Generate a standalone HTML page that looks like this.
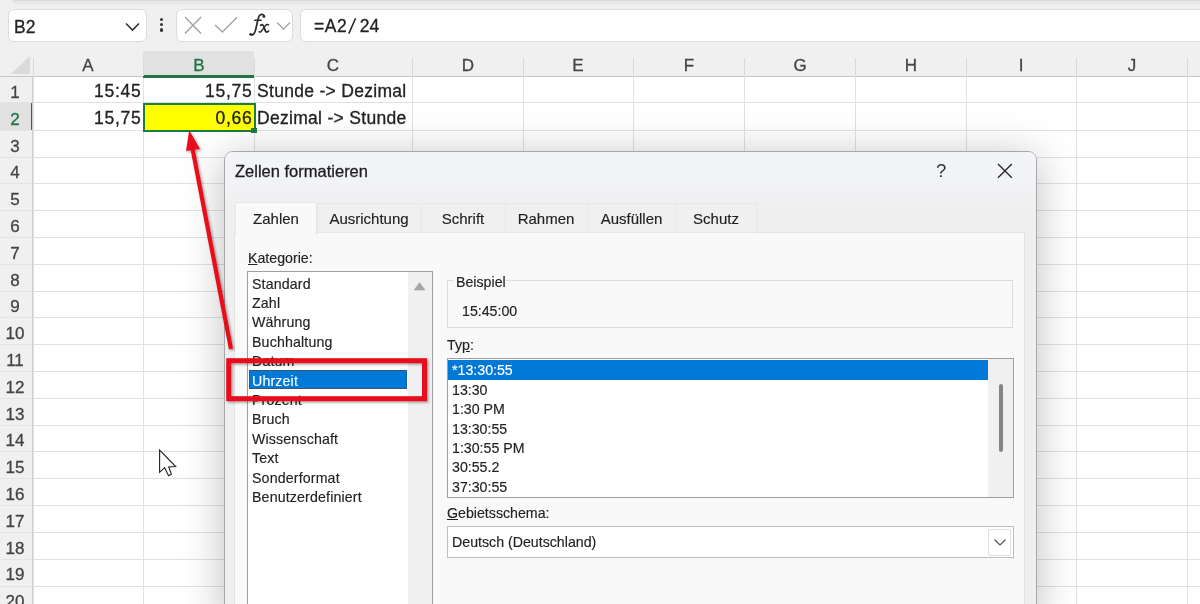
<!DOCTYPE html><html><head><meta charset="utf-8"><style>
*{margin:0;padding:0;box-sizing:border-box}
html,body{width:1200px;height:604px;overflow:hidden;background:#f0f0f0;font-family:"Liberation Sans",sans-serif;color:#222}
.a{position:absolute}
.box{position:absolute;background:#fff;border:1px solid #dcdcdc;border-radius:6px}
.t{position:absolute;white-space:nowrap;line-height:1;will-change:transform;-webkit-text-stroke:0.3px currentColor}
.hl{position:absolute;height:1px;background:#e1e1e1}
.vl{position:absolute;width:1px;background:#e1e1e1}
</style></head><body>
<div class="a" style="left:12px;top:0;width:1188px;height:5px;background:linear-gradient(#dadada 0px,#dadada 1px,#e8e8e8 1px,#e6e6e6 3.5px,#ececec 5px);border-bottom-left-radius:5px"></div><div class="box" style="left:8px;top:9px;width:139px;height:33px"></div><div class="t" style="left:13.5px;top:18.5px;font-size:17.5px;color:#222">B2</div><svg class="a" style="left:124px;top:21px" width="17" height="12"><path d="M2 2.5 L8.5 9 L15 2.5" fill="none" stroke="#333" stroke-width="1.6"/></svg><div class="a" style="left:159.9px;top:18.2px;width:3.2px;height:3.2px;border-radius:50%;background:#333"></div><div class="a" style="left:159.9px;top:23.2px;width:3.2px;height:3.2px;border-radius:50%;background:#333"></div><div class="a" style="left:159.9px;top:28.4px;width:3.2px;height:3.2px;border-radius:50%;background:#333"></div><div class="box" style="left:176px;top:9px;width:117px;height:33px"></div><svg class="a" style="left:176px;top:9px" width="117" height="32"><path d="M9 8 L25 24.5 M25 8 L9 24.5" stroke="#a6a6a6" stroke-width="1.5" fill="none"/><path d="M39 16 L46.5 23 L61 8.2" stroke="#a6a6a6" stroke-width="1.5" fill="none"/><path d="M101 13.5 L107.5 20 L114 13.5" stroke="#a6a6a6" stroke-width="1.3" fill="none"/></svg><svg class="a" style="left:0;top:0" width="300" height="45"><g fill="none" stroke="#2b2b2b" stroke-linecap="round"><path d="M264.2 16.6 C263.8 14.2 261 13.6 259.4 15.6 C257.8 17.8 256.6 27 255.2 31.2 C254.2 34.4 252.2 35.6 250.4 34.6" stroke-width="1.7"/><path d="M254.8 20.3 L261.2 20.3" stroke-width="1.4"/><path d="M260.6 25.4 C262 24.2 263.2 24.6 263.8 26.6 L265.1 30.4 C265.8 32.4 267.2 32.6 268.6 31.2" stroke-width="1.7"/><path d="M268.6 24.9 C267.4 24 266.2 24.5 265.2 25.9 L261.6 31 C260.6 32.4 259.6 32.4 259.1 31.6" stroke-width="1.4"/></g><circle cx="263.9" cy="16.4" r="1.4" fill="#2b2b2b"/><circle cx="250.7" cy="34.2" r="1.3" fill="#2b2b2b"/></svg><div class="box" style="left:300px;top:9px;width:920px;height:33px"></div><div class="t" style="left:314px;top:17.8px;font-size:17.5px;color:#222"><span style="letter-spacing:0.6px">=A2</span><span style="display:inline-block;width:12.3px"></span>24</div><svg class="a" style="left:340px;top:10px" width="30" height="30"><path d="M8.8 23.6 L15.6 8.3" stroke="#222" stroke-width="1.5"/></svg><div class="a" style="left:33px;top:51px;width:1167px;height:25px;background:#f0f0f0"></div><div class="a" style="left:143px;top:51px;width:111px;height:26px;background:#e1e1e1;border-bottom:2px solid #217346"></div><svg class="a" style="left:8px;top:54px" width="24" height="22"><path d="M22 2 L22 20 L3 20 Z" fill="#dadada"/></svg><div class="a" style="left:33px;top:76px;width:1167px;height:528px;background:#fff"></div><div class="a" style="left:0;top:76px;width:33px;height:528px;background:#f0f0f0"></div><div class="a" style="left:0;top:102px;width:33px;height:28px;background:#e1e1e1;border-right:2px solid #217346"></div><div class="a" style="left:0;top:76px;width:1200px;height:1px;background:#c6c6c6"></div><div class="hl" style="left:33px;top:102px;width:1167px"></div><div class="hl" style="left:0;top:102px;width:33px;background:#e4e4e4"></div><div class="hl" style="left:33px;top:130px;width:1167px"></div><div class="hl" style="left:0;top:130px;width:33px;background:#e4e4e4"></div><div class="hl" style="left:33px;top:157px;width:1167px"></div><div class="hl" style="left:0;top:157px;width:33px;background:#e4e4e4"></div><div class="hl" style="left:33px;top:183px;width:1167px"></div><div class="hl" style="left:0;top:183px;width:33px;background:#e4e4e4"></div><div class="hl" style="left:33px;top:210px;width:1167px"></div><div class="hl" style="left:0;top:210px;width:33px;background:#e4e4e4"></div><div class="hl" style="left:33px;top:237px;width:1167px"></div><div class="hl" style="left:0;top:237px;width:33px;background:#e4e4e4"></div><div class="hl" style="left:33px;top:264px;width:1167px"></div><div class="hl" style="left:0;top:264px;width:33px;background:#e4e4e4"></div><div class="hl" style="left:33px;top:291px;width:1167px"></div><div class="hl" style="left:0;top:291px;width:33px;background:#e4e4e4"></div><div class="hl" style="left:33px;top:317px;width:1167px"></div><div class="hl" style="left:0;top:317px;width:33px;background:#e4e4e4"></div><div class="hl" style="left:33px;top:344px;width:1167px"></div><div class="hl" style="left:0;top:344px;width:33px;background:#e4e4e4"></div><div class="hl" style="left:33px;top:371px;width:1167px"></div><div class="hl" style="left:0;top:371px;width:33px;background:#e4e4e4"></div><div class="hl" style="left:33px;top:398px;width:1167px"></div><div class="hl" style="left:0;top:398px;width:33px;background:#e4e4e4"></div><div class="hl" style="left:33px;top:425px;width:1167px"></div><div class="hl" style="left:0;top:425px;width:33px;background:#e4e4e4"></div><div class="hl" style="left:33px;top:451px;width:1167px"></div><div class="hl" style="left:0;top:451px;width:33px;background:#e4e4e4"></div><div class="hl" style="left:33px;top:478px;width:1167px"></div><div class="hl" style="left:0;top:478px;width:33px;background:#e4e4e4"></div><div class="hl" style="left:33px;top:505px;width:1167px"></div><div class="hl" style="left:0;top:505px;width:33px;background:#e4e4e4"></div><div class="hl" style="left:33px;top:532px;width:1167px"></div><div class="hl" style="left:0;top:532px;width:33px;background:#e4e4e4"></div><div class="hl" style="left:33px;top:559px;width:1167px"></div><div class="hl" style="left:0;top:559px;width:33px;background:#e4e4e4"></div><div class="hl" style="left:33px;top:586px;width:1167px"></div><div class="hl" style="left:0;top:586px;width:33px;background:#e4e4e4"></div><div class="vl" style="left:33px;top:76px;height:528px"></div><div class="vl" style="left:33px;top:58px;height:18px;background:#dadada"></div><div class="vl" style="left:143px;top:76px;height:528px"></div><div class="vl" style="left:143px;top:58px;height:18px;background:#dadada"></div><div class="vl" style="left:254px;top:76px;height:528px"></div><div class="vl" style="left:254px;top:58px;height:18px;background:#dadada"></div><div class="vl" style="left:412px;top:76px;height:528px"></div><div class="vl" style="left:412px;top:58px;height:18px;background:#dadada"></div><div class="vl" style="left:523px;top:76px;height:528px"></div><div class="vl" style="left:523px;top:58px;height:18px;background:#dadada"></div><div class="vl" style="left:633px;top:76px;height:528px"></div><div class="vl" style="left:633px;top:58px;height:18px;background:#dadada"></div><div class="vl" style="left:744px;top:76px;height:528px"></div><div class="vl" style="left:744px;top:58px;height:18px;background:#dadada"></div><div class="vl" style="left:855px;top:76px;height:528px"></div><div class="vl" style="left:855px;top:58px;height:18px;background:#dadada"></div><div class="vl" style="left:966px;top:76px;height:528px"></div><div class="vl" style="left:966px;top:58px;height:18px;background:#dadada"></div><div class="vl" style="left:1076px;top:76px;height:528px"></div><div class="vl" style="left:1076px;top:58px;height:18px;background:#dadada"></div><div class="vl" style="left:1187px;top:76px;height:528px"></div><div class="vl" style="left:1187px;top:58px;height:18px;background:#dadada"></div><div class="vl" style="left:32px;top:76px;height:528px;background:#d0d0d0"></div><div class="a" style="left:143px;top:75.5px;width:111px;height:2px;background:#217346"></div><div class="t" style="left:58.0px;width:60px;text-align:center;top:57px;font-size:17px;color:#444">A</div><div class="t" style="left:168.5px;width:60px;text-align:center;top:57px;font-size:17px;color:#217346">B</div><div class="t" style="left:303.0px;width:60px;text-align:center;top:57px;font-size:17px;color:#444">C</div><div class="t" style="left:437.5px;width:60px;text-align:center;top:57px;font-size:17px;color:#444">D</div><div class="t" style="left:548.0px;width:60px;text-align:center;top:57px;font-size:17px;color:#444">E</div><div class="t" style="left:658.5px;width:60px;text-align:center;top:57px;font-size:17px;color:#444">F</div><div class="t" style="left:769.5px;width:60px;text-align:center;top:57px;font-size:17px;color:#444">G</div><div class="t" style="left:880.5px;width:60px;text-align:center;top:57px;font-size:17px;color:#444">H</div><div class="t" style="left:991.0px;width:60px;text-align:center;top:57px;font-size:17px;color:#444">I</div><div class="t" style="left:1101.5px;width:60px;text-align:center;top:57px;font-size:17px;color:#444">J</div><div class="t" style="left:0;width:30px;text-align:center;top:83.9px;font-size:17px;color:#444">1</div><div class="t" style="left:0;width:30px;text-align:center;top:110.7px;font-size:17px;color:#217346">2</div><div class="t" style="left:0;width:30px;text-align:center;top:137.5px;font-size:17px;color:#444">3</div><div class="t" style="left:0;width:30px;text-align:center;top:164.3px;font-size:17px;color:#444">4</div><div class="t" style="left:0;width:30px;text-align:center;top:191.1px;font-size:17px;color:#444">5</div><div class="t" style="left:0;width:30px;text-align:center;top:217.9px;font-size:17px;color:#444">6</div><div class="t" style="left:0;width:30px;text-align:center;top:244.7px;font-size:17px;color:#444">7</div><div class="t" style="left:0;width:30px;text-align:center;top:271.5px;font-size:17px;color:#444">8</div><div class="t" style="left:0;width:30px;text-align:center;top:298.3px;font-size:17px;color:#444">9</div><div class="t" style="left:0;width:30px;text-align:center;top:325.1px;font-size:17px;color:#444">10</div><div class="t" style="left:0;width:30px;text-align:center;top:351.9px;font-size:17px;color:#444">11</div><div class="t" style="left:0;width:30px;text-align:center;top:378.7px;font-size:17px;color:#444">12</div><div class="t" style="left:0;width:30px;text-align:center;top:405.5px;font-size:17px;color:#444">13</div><div class="t" style="left:0;width:30px;text-align:center;top:432.3px;font-size:17px;color:#444">14</div><div class="t" style="left:0;width:30px;text-align:center;top:459.1px;font-size:17px;color:#444">15</div><div class="t" style="left:0;width:30px;text-align:center;top:485.9px;font-size:17px;color:#444">16</div><div class="t" style="left:0;width:30px;text-align:center;top:512.7px;font-size:17px;color:#444">17</div><div class="t" style="left:0;width:30px;text-align:center;top:539.5px;font-size:17px;color:#444">18</div><div class="t" style="left:0;width:30px;text-align:center;top:566.3px;font-size:17px;color:#444">19</div><div class="t" style="left:0;width:30px;text-align:center;top:593.1px;font-size:17px;color:#444">20</div><div class="a" style="left:143px;top:102.5px;width:113px;height:29.5px;background:#ffff00;border:2px solid #217a3f"></div><div class="a" style="left:251px;top:127.5px;width:6px;height:5.5px;background:#217a3f"></div><div class="t" style="left:33px;width:108.4px;text-align:right;top:83.3px;font-size:17.5px;letter-spacing:0.7px;color:#222">15:45</div><div class="t" style="left:143px;width:109.4px;text-align:right;top:83.3px;font-size:17.5px;letter-spacing:0.7px;color:#222">15,75</div><div class="t" style="left:257px;top:83.3px;font-size:17.5px;letter-spacing:0.3px;color:#222">Stunde -&gt; Dezimal</div><div class="t" style="left:33px;width:108.4px;text-align:right;top:110.3px;font-size:17.5px;letter-spacing:0.7px;color:#222">15,75</div><div class="t" style="left:143px;width:109.4px;text-align:right;top:110.3px;font-size:17.5px;letter-spacing:0.7px;color:#222">0,66</div><div class="t" style="left:257px;top:110.3px;font-size:17.5px;letter-spacing:0.3px;color:#222">Dezimal -&gt; Stunde</div><div class="a" style="left:224px;top:151px;width:813px;height:470px;border:1px solid #a8a8a8;border-radius:9px;background:#efefef;box-shadow:0 6px 44px rgba(0,0,0,0.26);overflow:hidden"><div class="a" style="left:0;top:0;width:811px;height:56px;background:linear-gradient(#f3f4f8 0px,#f2f3f6 30px,#efeff0 56px)"></div><div class="t" style="left:10px;top:10.5px;font-size:16.5px;color:#1f1f1f">Zellen formatieren</div><div class="t" style="left:710.5px;top:9.5px;font-size:18.5px;color:#333;-webkit-text-stroke:0">?</div><svg class="a" style="left:772px;top:11px" width="16" height="16"><path d="M1 1 L14.8 14.8 M14.8 1 L1 14.8" stroke="#2a2a2a" stroke-width="1.4"/></svg><div class="a" style="left:9px;top:80px;width:791px;height:400px;background:#f9f9f9;border-left:1px solid #e3e3e3;border-right:1px solid #e3e3e3;border-top:1px solid #e3e3e3"></div><div class="a" style="left:10px;top:50px;width:82px;height:33px;background:#f9f9f9;border:1px solid #e6e6e6;border-bottom:none"></div><div class="t" style="left:10px;top:59px;font-size:15px;-webkit-text-stroke:0.15px currentColor;width:82px;text-align:center;color:#222">Zahlen</div><div class="a" style="left:92px;top:51px;width:105px;height:30px;background:#f0f0f0;border:1px solid #e8e8e8"></div><div class="t" style="left:92px;top:59px;font-size:15px;-webkit-text-stroke:0.15px currentColor;width:104px;text-align:center;color:#222">Ausrichtung</div><div class="a" style="left:196px;top:51px;width:85px;height:30px;background:#f0f0f0;border:1px solid #e8e8e8"></div><div class="t" style="left:196px;top:59px;font-size:15px;-webkit-text-stroke:0.15px currentColor;width:84px;text-align:center;color:#222">Schrift</div><div class="a" style="left:280px;top:51px;width:83px;height:30px;background:#f0f0f0;border:1px solid #e8e8e8"></div><div class="t" style="left:280px;top:59px;font-size:15px;-webkit-text-stroke:0.15px currentColor;width:82px;text-align:center;color:#222">Rahmen</div><div class="a" style="left:362px;top:51px;width:90px;height:30px;background:#f0f0f0;border:1px solid #e8e8e8"></div><div class="t" style="left:362px;top:59px;font-size:15px;-webkit-text-stroke:0.15px currentColor;width:89px;text-align:center;color:#222">Ausf&uuml;llen</div><div class="a" style="left:451px;top:51px;width:81px;height:30px;background:#f0f0f0;border:1px solid #e8e8e8"></div><div class="t" style="left:451px;top:59px;font-size:15px;-webkit-text-stroke:0.15px currentColor;width:80px;text-align:center;color:#222">Schutz</div><div class="t" style="left:23px;top:99px;font-size:14.2px;-webkit-text-stroke:0.15px currentColor;color:#222"><u>K</u>ategorie:</div><div class="a" style="left:22px;top:119px;width:186px;height:340px;background:#fff;border:1px solid #a0a0a0"></div><div class="a" style="left:183px;top:120px;width:24px;height:340px;background:#f0f0f0"></div><svg class="a" style="left:188px;top:128.5px" width="14" height="12"><path d="M1.2 9 L6.6 1.6 L12 9 Z" fill="#a6a6a6" stroke="#a6a6a6" stroke-width="0.6" stroke-linejoin="round"/></svg><div class="t" style="left:27px;top:124.5px;font-size:14.2px;-webkit-text-stroke:0.15px currentColor;color:#222;letter-spacing:0.15px">Standard</div><div class="t" style="left:27px;top:143.89999999999998px;font-size:14.2px;-webkit-text-stroke:0.15px currentColor;color:#222;letter-spacing:0.15px">Zahl</div><div class="t" style="left:27px;top:163.3px;font-size:14.2px;-webkit-text-stroke:0.15px currentColor;color:#222;letter-spacing:0.15px">W&auml;hrung</div><div class="t" style="left:27px;top:182.7px;font-size:14.2px;-webkit-text-stroke:0.15px currentColor;color:#222;letter-spacing:0.15px">Buchhaltung</div><div class="t" style="left:27px;top:202.10000000000002px;font-size:14.2px;-webkit-text-stroke:0.15px currentColor;color:#222;letter-spacing:0.15px">Datum</div><div class="a" style="left:24px;top:218px;width:158px;height:19px;background:#0078d7;border:1px dotted #2a4a6a"></div><div class="t" style="left:27px;top:221.5px;font-size:14.2px;-webkit-text-stroke:0.15px currentColor;color:#fff;letter-spacing:0.15px">Uhrzeit</div><div class="t" style="left:27px;top:240.89999999999998px;font-size:14.2px;-webkit-text-stroke:0.15px currentColor;color:#222;letter-spacing:0.15px">Prozent</div><div class="t" style="left:27px;top:260.29999999999995px;font-size:14.2px;-webkit-text-stroke:0.15px currentColor;color:#222;letter-spacing:0.15px">Bruch</div><div class="t" style="left:27px;top:279.7px;font-size:14.2px;-webkit-text-stroke:0.15px currentColor;color:#222;letter-spacing:0.15px">Wissenschaft</div><div class="t" style="left:27px;top:299.1px;font-size:14.2px;-webkit-text-stroke:0.15px currentColor;color:#222;letter-spacing:0.15px">Text</div><div class="t" style="left:27px;top:318.5px;font-size:14.2px;-webkit-text-stroke:0.15px currentColor;color:#222;letter-spacing:0.15px">Sonderformat</div><div class="t" style="left:27px;top:337.9px;font-size:14.2px;-webkit-text-stroke:0.15px currentColor;color:#222;letter-spacing:0.15px">Benutzerdefiniert</div><div class="a" style="left:222px;top:128px;width:566px;height:48px;border:1px solid #dcdcdc"></div><div class="a" style="left:228px;top:122px;width:53px;height:12px;background:#f9f9f9"></div><div class="t" style="left:231px;top:122.5px;font-size:14.2px;-webkit-text-stroke:0.15px currentColor;color:#222">Beispiel</div><div class="t" style="left:237px;top:152px;font-size:14.2px;-webkit-text-stroke:0.15px currentColor;color:#222">15:45:00</div><div class="t" style="left:222px;top:185.5px;font-size:14.2px;-webkit-text-stroke:0.15px currentColor;color:#222">Ty<u>p</u>:</div><div class="a" style="left:222px;top:206px;width:567px;height:140px;background:#fff;border:1px solid #a0a0a0"></div><div class="a" style="left:763px;top:207px;width:25px;height:138px;background:#f0f0f0"></div><div class="a" style="left:773.5px;top:232px;width:4.5px;height:68px;background:#858585;border-radius:3px"></div><div class="a" style="left:223px;top:208px;width:540px;height:19.5px;background:#0078d7"></div><div class="t" style="left:226.5px;top:211.3px;font-size:14.2px;-webkit-text-stroke:0.15px currentColor;color:#fff">*13:30:55</div><div class="t" style="left:226.5px;top:230.7px;font-size:14.2px;-webkit-text-stroke:0.15px currentColor;color:#222">13:30</div><div class="t" style="left:226.5px;top:250.10000000000002px;font-size:14.2px;-webkit-text-stroke:0.15px currentColor;color:#222">1:30 PM</div><div class="t" style="left:226.5px;top:269.5px;font-size:14.2px;-webkit-text-stroke:0.15px currentColor;color:#222">13:30:55</div><div class="t" style="left:226.5px;top:288.9px;font-size:14.2px;-webkit-text-stroke:0.15px currentColor;color:#222">1:30:55 PM</div><div class="t" style="left:226.5px;top:308.3px;font-size:14.2px;-webkit-text-stroke:0.15px currentColor;color:#222">30:55.2</div><div class="t" style="left:226.5px;top:327.7px;font-size:14.2px;-webkit-text-stroke:0.15px currentColor;color:#222">37:30:55</div><div class="t" style="left:222px;top:353.5px;font-size:14.2px;-webkit-text-stroke:0.15px currentColor;color:#222"><u>G</u>ebietsschema:</div><div class="a" style="left:222px;top:374px;width:567px;height:32px;background:#fff;border:1px solid #bdbdbd"></div><div class="a" style="left:763px;top:377px;width:23px;height:27px;background:#fff;border:1px solid #dedede;border-radius:2px"></div><svg class="a" style="left:767.5px;top:384.5px" width="14" height="10"><path d="M1.5 2.5 L7 8 L12.5 2.5" fill="none" stroke="#555" stroke-width="1.2"/></svg><div class="t" style="left:227px;top:383px;font-size:14.2px;-webkit-text-stroke:0.15px currentColor;color:#222">Deutsch (Deutschland)</div></div><svg class="a" style="left:0;top:0" width="1200" height="604"><defs><filter id="sh" x="-20%" y="-20%" width="140%" height="140%"><feDropShadow dx="1.5" dy="1.5" stdDeviation="1.2" flood-color="#000" flood-opacity="0.35"/></filter></defs><g filter="url(#sh)"><line x1="231" y1="349" x2="192" y2="146" stroke="#e8101a" stroke-width="4.2" stroke-linecap="butt"/><path d="M189.2 130.3 L186 151 L200 149 Z" fill="#e8101a"/><rect x="228.7" y="360.7" width="195.8" height="38" fill="none" stroke="#e8101a" stroke-width="5"/></g><path d="M159.6 450.2 L159.6 472.3 L164.6 467.7 L168.6 475.8 L171.4 474.3 L168.7 467 L175.7 466.6 Z" fill="#fff" stroke="#222" stroke-width="1.1" stroke-linejoin="miter"/></svg></body></html>
